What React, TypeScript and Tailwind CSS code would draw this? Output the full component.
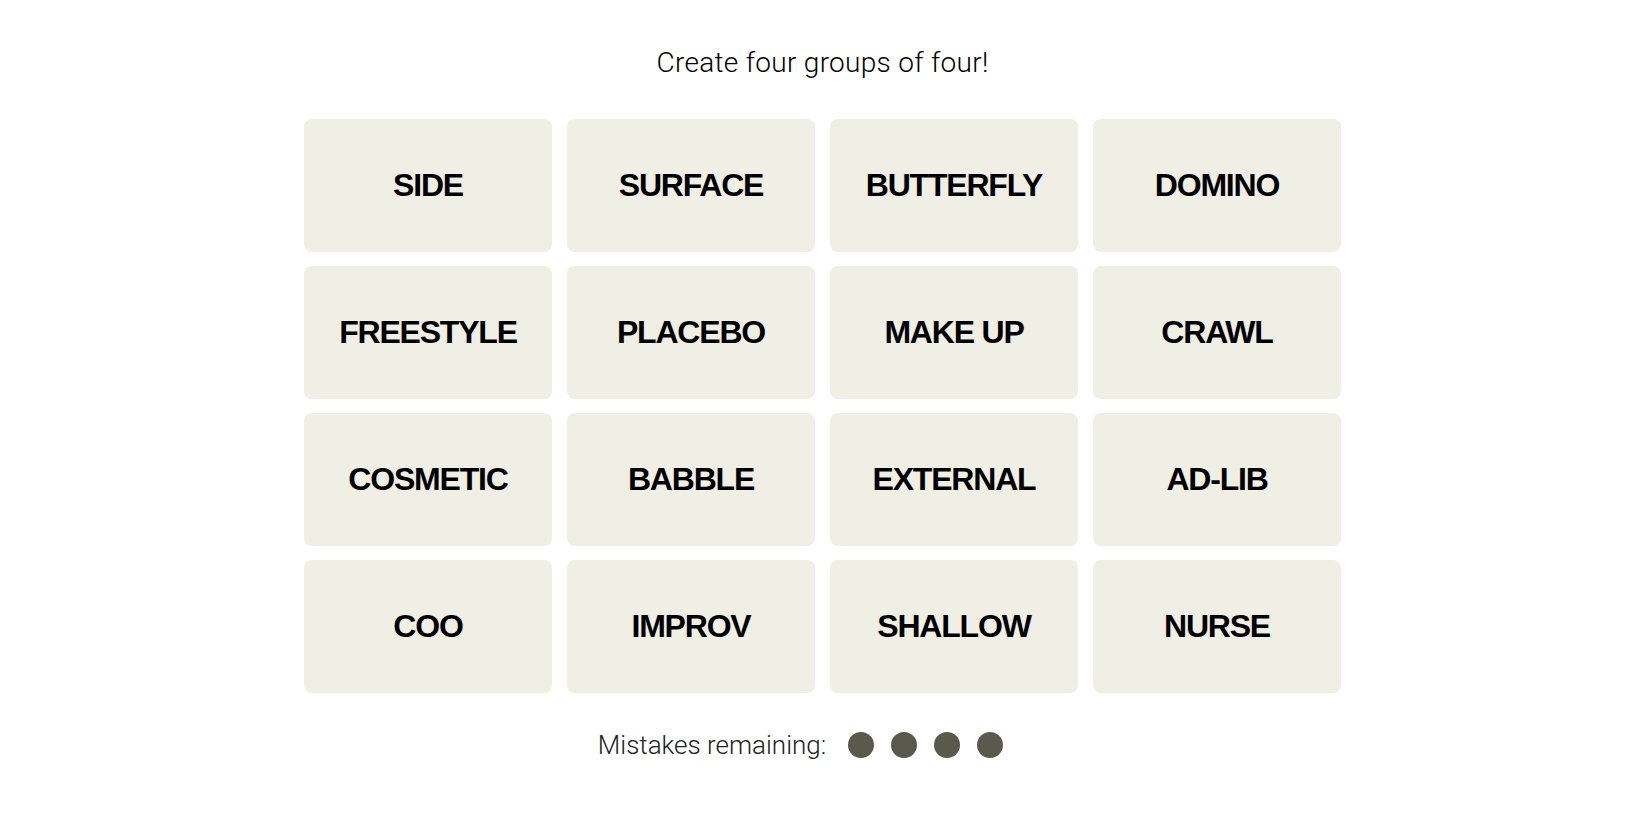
const words = [
  "SIDE", "SURFACE", "BUTTERFLY", "DOMINO",
  "FREESTYLE", "PLACEBO", "MAKE UP", "CRAWL",
  "COSMETIC", "BABBLE", "EXTERNAL", "AD-LIB",
  "COO", "IMPROV", "SHALLOW", "NURSE",
];

export default function App() {
  return (
    <div className="min-h-screen bg-white flex flex-col items-center pt-[47px] pr-[5px] font-['Roboto',sans-serif]">
      <p className="h-[32px] leading-[32px] text-[28px] font-light tracking-[0.3px] text-black">Create four groups of four!</p>

      <div className="mt-[40px] grid w-[1037px] grid-cols-4 gap-x-[15px] gap-y-[14px]">
        {words.map((word) => (
          <button
            key={word}
            className="flex h-[133px] items-center justify-center rounded-[8px] bg-[#efefe6] pb-[2px] font-['Liberation_Sans',sans-serif] text-[32px] font-bold tracking-[-1.2px] text-black"
          >
            {word}
          </button>
        ))}
      </div>

      <div className="mt-[36px] flex h-[32px] items-center">
        <span className="text-[26px] font-light text-[#222]">Mistakes remaining:</span>
        <div className="ml-[22px] mr-[44px] flex gap-[17px]">
          {[0, 1, 2, 3].map((i) => (
            <span key={i} className="h-[26px] w-[26px] rounded-full bg-[#5a594e]" />
          ))}
        </div>
      </div>
    </div>
  );
}
